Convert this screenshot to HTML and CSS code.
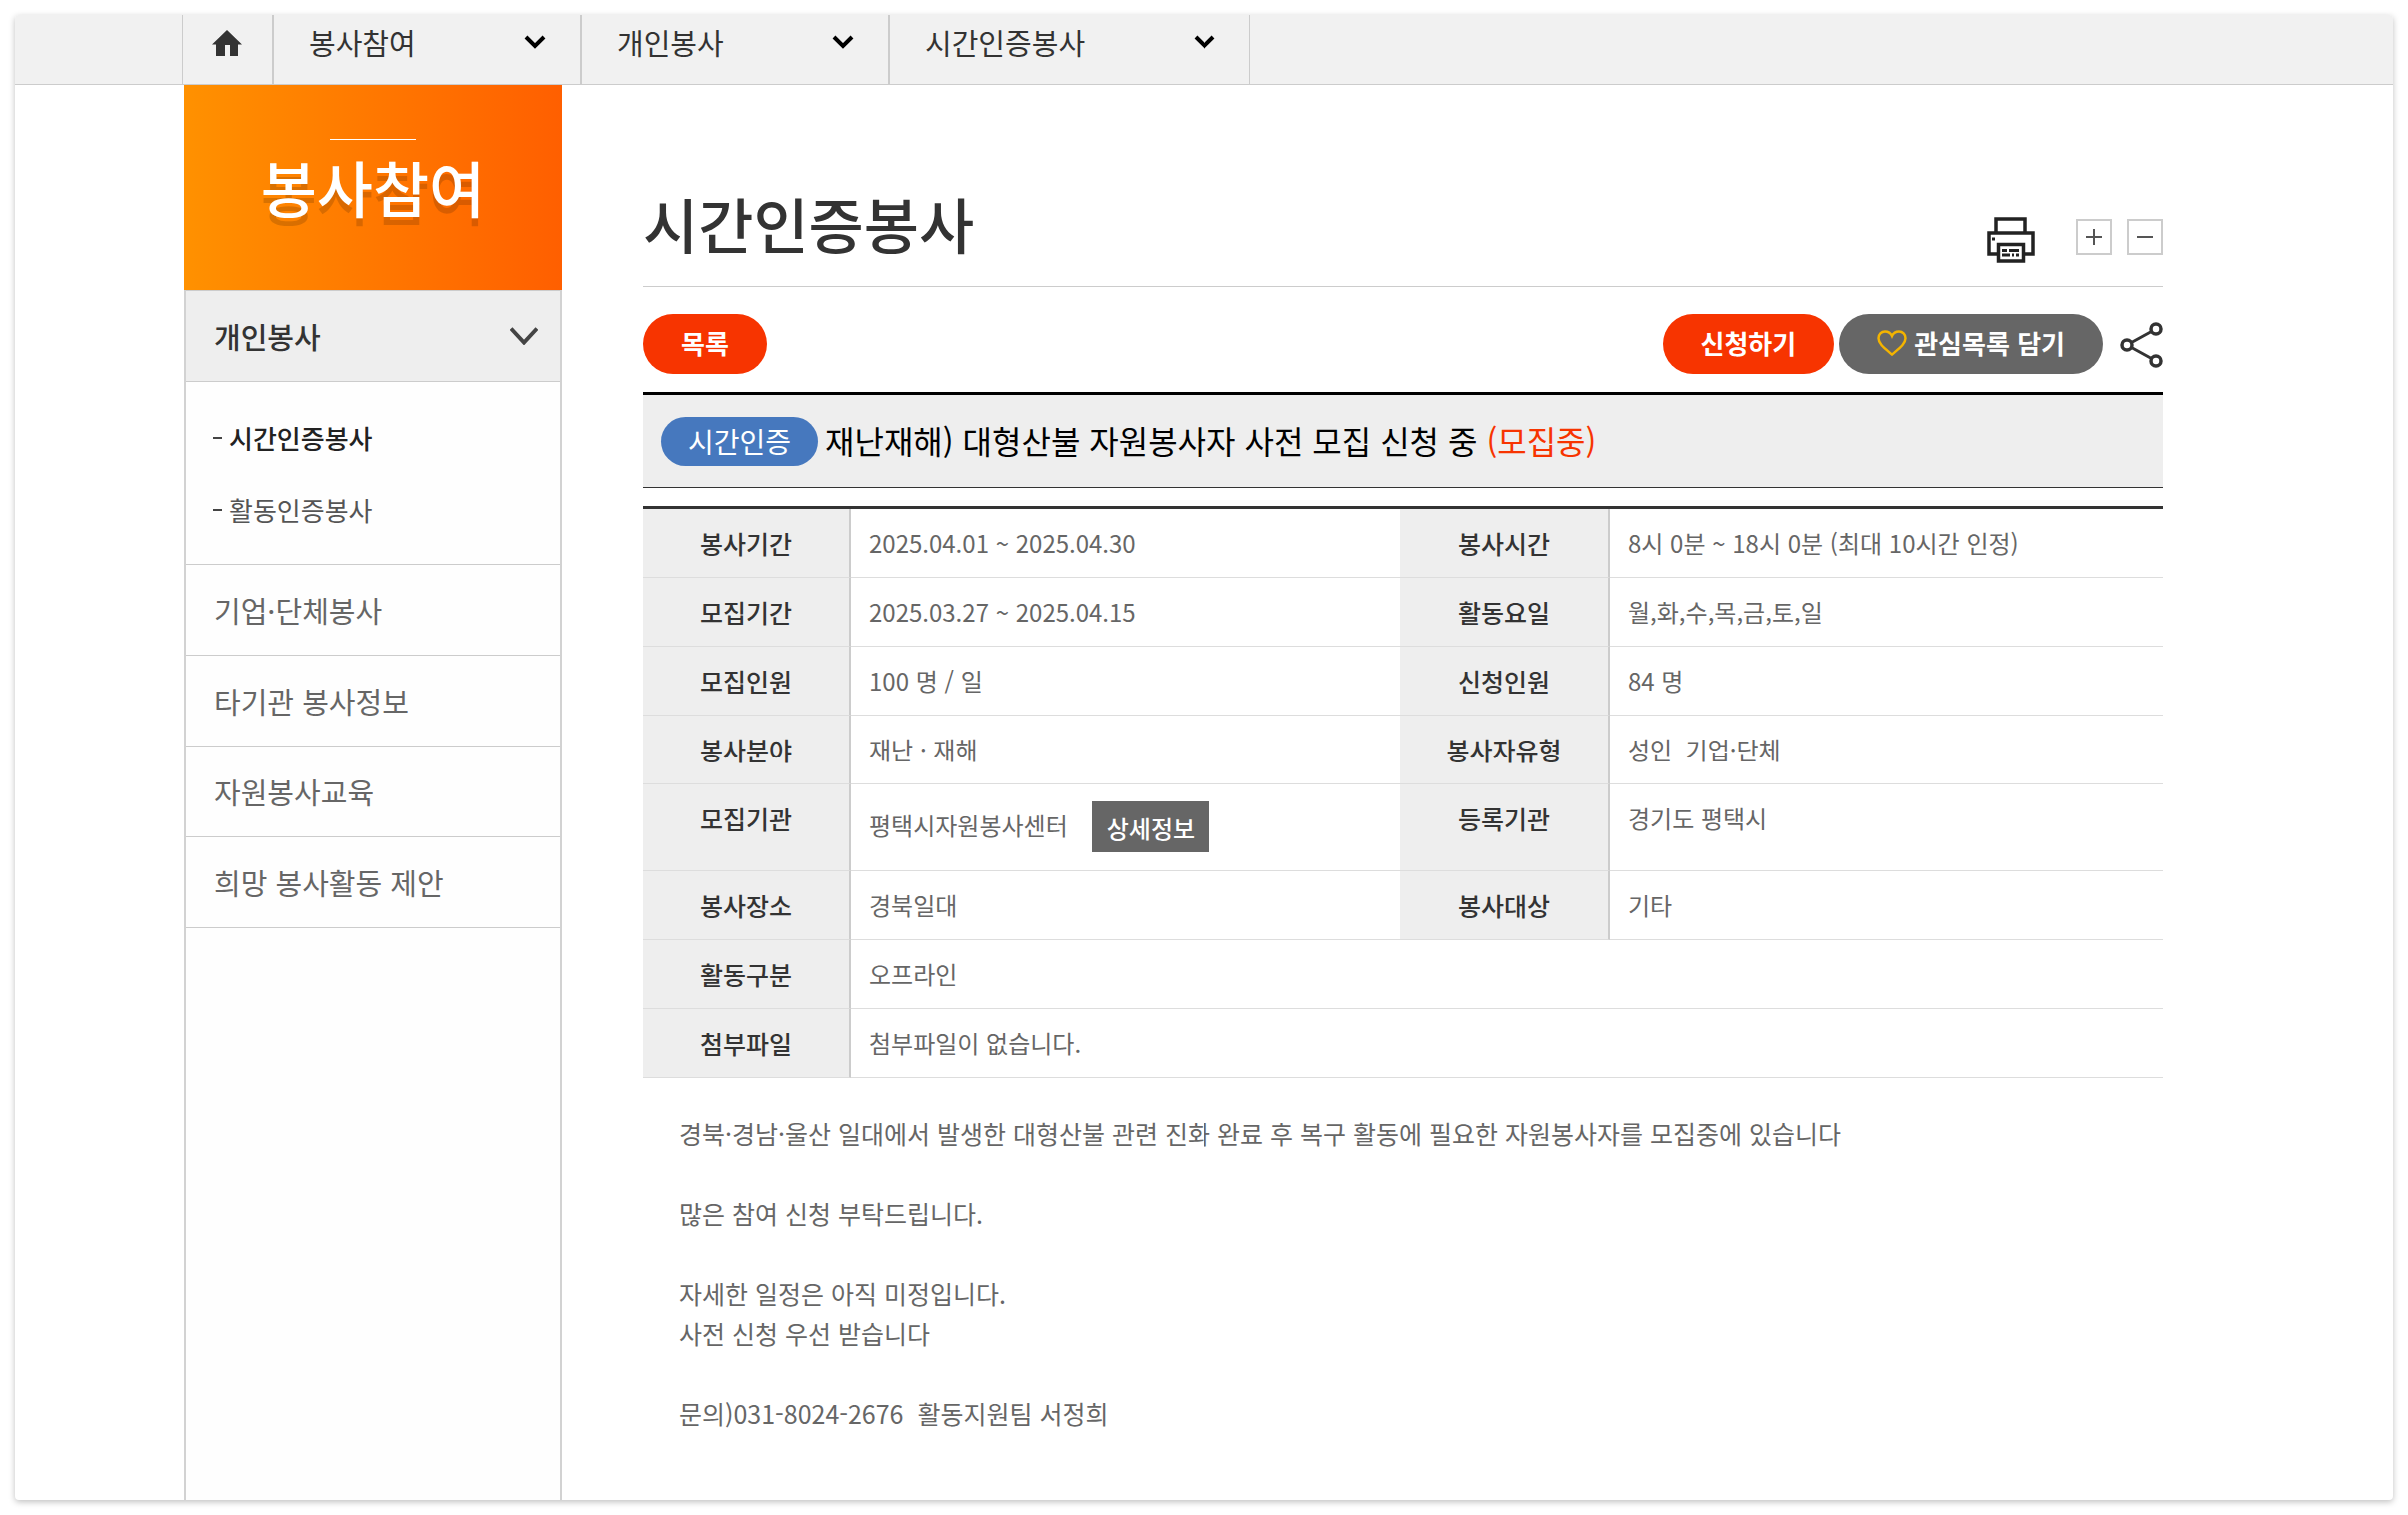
FILE: index.html
```html
<!DOCTYPE html>
<html lang="ko">
<head>
<meta charset="utf-8">
<title>시간인증봉사</title>
<meta name="viewport" content="width=device-width, initial-scale=1">
<link rel="stylesheet" href="styles.css">
</head>
<body>
<div class="frame">
  <nav class="crumbs" aria-label="현재 위치">
    <div class="crumbs-inner">
      <a class="crumb-home" href="#" aria-label="홈">
        <svg width="30" height="26" viewBox="0 0 30 26"><path fill="#333" d="M15 0 30 14.500H26V26H18V15H13V26H4V14.500H0Z"/></svg>
      </a>
      <div class="crumb">
        <select aria-label="1차 메뉴"><option>봉사참여</option></select>
        <svg class="crumb-arrow" width="22" height="14" viewBox="0 0 22 14"><path d="M2 2 11 11 20 2" fill="none" stroke="#000" stroke-width="4"/></svg>
      </div>
      <div class="crumb">
        <select aria-label="2차 메뉴"><option>개인봉사</option></select>
        <svg class="crumb-arrow" width="22" height="14" viewBox="0 0 22 14"><path d="M2 2 11 11 20 2" fill="none" stroke="#000" stroke-width="4"/></svg>
      </div>
      <div class="crumb crumb-last">
        <select aria-label="3차 메뉴"><option>시간인증봉사</option></select>
        <svg class="crumb-arrow" width="22" height="14" viewBox="0 0 22 14"><path d="M2 2 11 11 20 2" fill="none" stroke="#000" stroke-width="4"/></svg>
      </div>
    </div>
  </nav>

  <div class="layout">
    <aside class="side">
      <h2 class="side-title">봉사참여</h2>
      <ul class="menu">
        <li>
          <a class="menu-link menu-open" href="#">개인봉사
            <svg width="28" height="18" viewBox="0 0 28 18"><path d="M1 1.500 14 15.500 27 1.500" fill="none" stroke="#444" stroke-width="4"/></svg>
          </a>
          <ul class="submenu">
            <li><a class="current" href="#">시간인증봉사</a></li>
            <li><a href="#">활동인증봉사</a></li>
          </ul>
        </li>
        <li><a class="menu-link" href="#">기업·단체봉사</a></li>
        <li><a class="menu-link" href="#">타기관 봉사정보</a></li>
        <li><a class="menu-link" href="#">자원봉사교육</a></li>
        <li><a class="menu-link" href="#">희망 봉사활동 제안</a></li>
      </ul>
    </aside>

    <main class="main">
      <header class="page-head">
        <h1>시간인증봉사</h1>
        <div class="tools">
          <button class="tool-print" type="button" aria-label="인쇄">
            <svg width="48" height="46" viewBox="0 0 48 46" fill="none" stroke="#222" stroke-width="3.500"><path d="M9 15V2H38V15M11 37H2V16H46V37H37"/><path d="M11.500 27.500H36.500V44H11.500Z"/><path stroke-width="3" d="M15 33.500H20M22 33.500H32M15 38H23M25 38H27M29 38H32M5 22H8"/></svg>
          </button>
          <button class="tool-size" type="button" aria-label="글자 크게">
            <svg width="18" height="18" viewBox="0 0 18 18"><path d="M1 9H17M9 1V17" stroke="#555" stroke-width="2"/></svg>
          </button>
          <button class="tool-size" type="button" aria-label="글자 작게">
            <svg width="18" height="18" viewBox="0 0 18 18"><path d="M1 9H17" stroke="#555" stroke-width="2"/></svg>
          </button>
        </div>
      </header>

      <div class="actions">
        <a class="pill pill-red" href="#">목록</a>
        <div class="actions-right">
          <button class="pill pill-red" type="button">신청하기</button>
          <button class="pill pill-gray" type="button">
            <svg width="30" height="26" viewBox="0 0 30 26"><path d="M15 24.500C8 18.500 1.500 14 1.500 8.200 1.500 4.300 4.400 1.500 8 1.500 11.200 1.500 13.800 3.400 15 6 16.200 3.400 18.800 1.500 22 1.500 25.600 1.500 28.500 4.300 28.500 8.200 28.500 14 22 18.500 15 24.500Z" fill="none" stroke="#f4b400" stroke-width="2.500"/></svg>
            관심목록 담기
          </button>
          <button class="share" type="button" aria-label="공유">
            <svg width="43" height="46" viewBox="0 0 43 46" fill="none" stroke="#333" stroke-width="3.500"><circle cx="7" cy="23" r="5"/><circle cx="36" cy="7" r="5"/><circle cx="36" cy="39" r="5"/><path stroke-width="3" d="M11.500 20.500 31.500 9.500M11.500 25.500 31.500 36.500"/></svg>
          </button>
        </div>
      </div>

      <div class="subject">
        <span class="badge">시간인증</span>
        <h3>재난재해) 대형산불 자원봉사자 사전 모집 신청 중 <em>(모집중)</em></h3>
      </div>

      <table class="info">
        <colgroup><col class="col-label"><col class="col-first"><col class="col-label-wide"><col></colgroup>
        <tbody>
          <tr><th scope="row">봉사기간</th><td>2025.04.01 ~ 2025.04.30</td><th scope="row">봉사시간</th><td>8시 0분 ~ 18시 0분 (최대 10시간 인정)</td></tr>
          <tr><th scope="row">모집기간</th><td>2025.03.27 ~ 2025.04.15</td><th scope="row">활동요일</th><td>월,화,수,목,금,토,일</td></tr>
          <tr><th scope="row">모집인원</th><td>100 명 / 일</td><th scope="row">신청인원</th><td>84 명</td></tr>
          <tr><th scope="row">봉사분야</th><td>재난 · 재해</td><th scope="row">봉사자유형</th><td>성인&nbsp; 기업·단체</td></tr>
          <tr><th scope="row">모집기관</th><td><div class="org">평택시자원봉사센터<button class="detail" type="button">상세정보</button></div></td><th scope="row">등록기관</th><td>경기도 평택시</td></tr>
          <tr><th scope="row">봉사장소</th><td>경북일대</td><th scope="row">봉사대상</th><td>기타</td></tr>
          <tr><th scope="row">활동구분</th><td colspan="3">오프라인</td></tr>
          <tr><th scope="row">첨부파일</th><td colspan="3">첨부파일이 없습니다.</td></tr>
        </tbody>
      </table>

      <div class="body-text">
        <p>경북·경남·울산 일대에서 발생한 대형산불 관련 진화 완료 후 복구 활동에 필요한 자원봉사자를 모집중에 있습니다</p>
        <p>많은 참여 신청 부탁드립니다.</p>
        <p>자세한 일정은 아직 미정입니다.<br>사전 신청 우선 받습니다</p>
        <p>문의)031-8024-2676&nbsp; 활동지원팀 서정희</p>
      </div>
    </main>
  </div>
</div>
</body>
</html>
```
FILE: styles.css
```css
* { box-sizing: border-box; }

body {
  margin: 0;
  padding: 15px;
  background: #fff;
  color: #666;
  font-family: "Noto Sans CJK KR", "Noto Sans", sans-serif;
  font-size: 24px;
}

h1, h2, h3, p, ul { margin: 0; padding: 0; }
ul { list-style: none; }
a { color: inherit; text-decoration: none; }
svg { display: block; flex: none; }
button { border: 0; padding: 0; background: none; color: inherit; font: inherit; cursor: pointer; }

.frame {
  display: flex;
  flex-direction: column;
  min-height: calc(100vh - 30px);
  border-radius: 4px;
  background: #fff;
  box-shadow: 0 2px 6px rgba(0, 0, 0, .25);
  overflow: hidden;
}

/* location bar */
.crumbs { background: #f1f1f1; border-bottom: 1px solid #ccc; }
.crumbs-inner {
  display: flex;
  width: 100%;
  max-width: 2045px;
  height: 69px;
  margin: 0 auto;
  border-left: 1px solid #ccc;
}
.crumb-home { display: flex; justify-content: center; width: 89px; padding: 15px 2px 0 0; }
.crumb { display: grid; width: 308px; border-left: 2px solid #ccc; }
.crumb-last { width: 363px; border-right: 1px solid #ccc; }
.crumb select,
.crumb-arrow { grid-area: 1 / 1; }
.crumb select {
  appearance: none;
  width: 100%;
  padding: 0 0 16px 35px;
  border: 0;
  background: none;
  color: #333;
  font: inherit;
  font-size: 29px;
}
.crumb-arrow { justify-self: end; margin: 20px 34px 0 0; pointer-events: none; }

/* columns */
.layout {
  display: flex;
  flex: 1;
  width: 100%;
  max-width: 2041px;
  margin: 0 auto;
}
.side {
  width: 378px;
  flex: none;
  border: solid #d2d2d2;
  border-width: 0 2px;
  background: #fefefe;
}
.main { flex: 1; min-width: 0; padding: 0 61px 60px 81px; }

/* side menu */
.side-title {
  display: flex;
  flex-direction: column;
  align-items: center;
  height: 205px;
  margin: 0 -2px;
  padding-top: 54px;
  background: linear-gradient(90deg, #ff9100, #ff5f00);
  color: #fff;
  font-size: 61px;
  font-weight: 500;
  line-height: 94px;
  text-shadow: 0 8px 0 rgba(0, 0, 0, .15);
}
.side-title::before { content: ""; width: 86px; height: 1px; background: #fff; }
.menu > li { border-bottom: 1px solid #ccc; }
.menu-link {
  display: flex;
  align-items: center;
  justify-content: space-between;
  height: 90px;
  padding: 0 22px 0 28px;
  font-size: 29px;
}
.menu-open {
  height: 92px;
  border: solid #ccc;
  border-width: 1px 0;
  background: #eee;
  color: #333;
  font-weight: 500;
}
.submenu { padding: 20px 0 18px 27px; }
.submenu a { display: flex; align-items: center; gap: 7px; font-size: 26px; line-height: 72px; color: #555; }
.submenu a::before { content: ""; width: 9px; height: 2px; background: #444; }
.submenu .current { color: #222; font-weight: 500; }

/* page heading */
.page-head {
  display: flex;
  justify-content: space-between;
  align-items: flex-end;
  padding-top: 93px;
  border-bottom: 1px solid #ccc;
}
h1 { color: #333; font-size: 60px; font-weight: 500; line-height: 90px; padding-bottom: 18px; }
.tools { display: flex; align-items: center; gap: 15px; padding-bottom: 23px; }
.tool-print { margin-right: 26px; }
.tool-size {
  display: grid;
  place-items: center;
  width: 36px;
  height: 36px;
  margin-bottom: 6px;
  border: 2px solid #ccc;
  background: #fff;
}

/* action buttons */
.actions { display: flex; justify-content: space-between; padding: 27px 0 18px; }
.actions-right { display: flex; gap: 5px; }
.pill {
  display: flex;
  align-items: center;
  gap: 7px;
  height: 60px;
  padding: 0 38px 3px;
  border-radius: 30px;
  color: #fff;
  font-size: 26px;
  font-weight: 700;
}
.pill-red { background: #f73400; }
.pill-gray { background: #666; }
.share { margin-left: 12px; padding-top: 2px; }

/* subject */
.subject {
  display: flex;
  align-items: center;
  gap: 7px;
  height: 96px;
  padding: 0 18px;
  border-top: 3px solid #000;
  border-bottom: 1px solid #333;
  background: #eee;
}
.badge {
  padding: 0 27px;
  border-radius: 25px;
  background: #4678be;
  color: #fff;
  font-size: 28px;
  line-height: 49px;
}
h3 { padding-bottom: 2px; color: #000; font-size: 32px; font-weight: 400; }
h3 em { color: #f73400; font-style: normal; }

/* details table */
.info {
  width: 100%;
  margin-top: 18px;
  border-collapse: separate;
  border-spacing: 0;
  border-top: 3px solid #333;
  table-layout: fixed;
}
.col-label { width: 208px; }
.col-first { width: 550px; }
.col-label-wide { width: 210px; }
.info th,
.info td {
  height: 69px;
  padding: 16px 18px;
  border-bottom: 1px solid #ddd;
  line-height: 36px;
  text-align: left;
  vertical-align: top;
}
.info th {
  padding: 16px 0;
  border-right: 2px solid #ccc;
  background: #eee;
  color: #333;
  font-size: 25px;
  font-weight: 500;
  text-align: center;
}
.org { display: flex; align-items: flex-start; gap: 24px; padding: 1px 0 2px; line-height: 47px; }
.detail { height: 51px; padding: 2px 15px 0; background: #666; color: #fff; font-weight: 500; line-height: 48px; }

/* body */
.body-text { padding: 35px 36px 0; font-size: 25px; line-height: 40px; }
.body-text p + p { margin-top: 40px; }
```
